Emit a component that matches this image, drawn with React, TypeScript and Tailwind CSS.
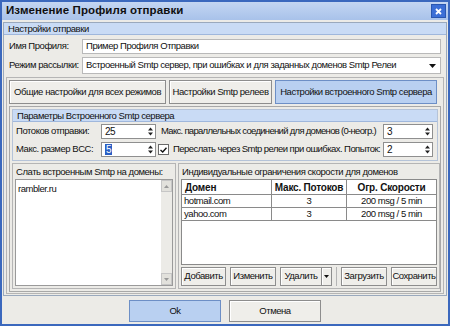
import React from 'react';

const Spin = ({ value, w, selected }: { value: string; w: string; selected?: boolean }) => (
  <div className={`${w} shrink-0 h-[15px] bg-white border border-[#8f8f8f] flex items-center pl-[3px] pr-[2px]`}>
    <span className="flex-1 text-[10px] leading-[12px]">
      {selected ? <span className="bg-[#2a5fc4] text-white px-[1px]">{value}</span> : value}
    </span>
    <svg width="5" height="9" viewBox="0 0 5 9">
      <path d="M2.5 0.5 L5 3.5 L0 3.5 Z" fill="#222" />
      <path d="M0 5.5 L5 5.5 L2.5 8.5 Z" fill="#222" />
    </svg>
  </div>
);

const Btn = ({ children, className = '' }: { children: React.ReactNode; className?: string }) => (
  <div
    className={`h-[19px] shrink-0 flex items-center justify-center border border-[#8d8d8d] bg-[#efeeea] shadow-[inset_1px_1px_0_#fff] ${className}`}
  >
    {children}
  </div>
);

const GroupHead = ({ children }: { children: React.ReactNode }) => (
  <div className="h-[12px] bg-[#c9dbf5] border-b border-[#9fb7dc] flex items-center pl-[4px] leading-none text-[#111]">
    {children}
  </div>
);

export default function App() {
  return (
    <div className="w-[450px] h-[326px] bg-[#3b68bd] p-[2px] font-['Liberation_Sans',Arial,sans-serif] text-[9.5px] text-[#111] overflow-hidden whitespace-nowrap tracking-[-0.45px]">
      <div className="w-full h-full flex flex-col bg-[#ecebe7]">
        {/* title bar */}
        <div className="h-[18px] shrink-0 bg-gradient-to-b from-[#c4d6f2] to-[#a8c2ea] flex items-center pl-[4px] pr-[2px]">
          <span className="flex-1 text-[11.5px] font-bold tracking-[0.1px] text-[#101010]">Изменение Профиля отправки</span>
          <div className="w-[15px] h-[14px] bg-[#3c6fd6] border border-[#2a57b0] flex items-center justify-center">
            <svg width="7" height="7" viewBox="0 0 7 7">
              <path d="M1 1 L6 6 M6 1 L1 6" stroke="#fff" strokeWidth="1.8" />
            </svg>
          </div>
        </div>

        {/* main group */}
        <div className="mx-[1px] mt-[2px] border border-[#9aa9bd] bg-[#ecebe7] flex flex-col">
          <GroupHead>Настройки отправки</GroupHead>
          <div className="flex items-center h-[18px] mt-[2px] px-[5px]">
            <span className="w-[73px] shrink-0">Имя Профиля:</span>
            <div className="flex-1 h-[15px] bg-white border border-[#b9b9b9] flex items-center pl-[3px]">
              Пример Профиля Отправки
            </div>
          </div>
          <div className="flex items-center h-[19px] mt-[1px] px-[5px]">
            <span className="w-[73px] shrink-0">Режим рассылки:</span>
            <div className="flex-1 h-[17px] bg-white border border-[#b9b9b9] flex items-center pl-[3px] pr-[4px]">
              <span className="flex-1">Встроенный Smtp сервер, при ошибках и для заданных доменов Smtp Релеи</span>
              <svg width="7" height="4" viewBox="0 0 7 4">
                <path d="M0 0 L7 0 L3.5 4 Z" fill="#111" />
              </svg>
            </div>
          </div>

          {/* tabs area */}
          <div className="mx-[2px] mt-[2px] mb-[1px] border border-[#b5b5b5] flex flex-col px-[2px] pb-[1px]">
            <div className="flex gap-[3px] mt-[2px] h-[24px]">
              <Btn className="w-[157px] h-[24px]">Общие настройки для всех режимов</Btn>
              <Btn className="w-[103px] h-[24px]">Настройки Smtp релеев</Btn>
              <div className="w-[162px] h-[24px] flex items-center justify-center border border-[#6d8fc6] bg-[#b9d0f1]">
                Настройки встроенного Smtp сервера
              </div>
            </div>

            <div className="mt-[2px] border border-[#a8a8a8] flex flex-col p-[2px]">
              <div className="border border-[#b5c3d8] flex flex-col">
                <GroupHead>Параметры Встроенного Smtp сервера</GroupHead>
                <div className="flex items-center h-[15px] mt-[2px] pl-[3px] pr-[4px]">
                  <span className="w-[85px] shrink-0">Потоков отправки:</span>
                  <Spin value="25" w="w-[55px]" />
                  <span className="ml-[5px] flex-1 min-w-0 overflow-hidden tracking-[-0.7px]">Макс. параллельных соединений для доменов (0-неогр.)</span>
                  <Spin value="3" w="w-[50px]" />
                </div>
                <div className="flex items-center h-[15px] mt-[3px] mb-[3px] pl-[3px] pr-[4px]">
                  <span className="w-[85px] shrink-0">Макс. размер BCC:</span>
                  <Spin value="5" w="w-[55px]" selected />
                  <div className="ml-[2px] shrink-0 w-[11px] h-[11px] bg-white border border-[#6a6a6a] flex items-center justify-center">
                    <svg width="7" height="6" viewBox="0 0 7 6">
                      <path d="M0.5 3 L2.7 5 L6.5 0.7" stroke="#111" strokeWidth="1.4" fill="none" />
                    </svg>
                  </div>
                  <span className="ml-[4px] flex-1 min-w-0 overflow-hidden tracking-[-0.55px]">Переслать через Smtp релеи при ошибках. Попыток:</span>
                  <Spin value="2" w="w-[50px]" />
                </div>
              </div>

              <div className="flex gap-[2px] mt-[2px] h-[126px]">
                {/* left list */}
                <div className="w-[164px] shrink-0 border border-[#b5b5b5] flex flex-col px-[2px] pb-[2px]">
                  <span className="mt-[2px] ml-[1px] leading-[12px]">Слать встроенным Smtp на домены:</span>
                  <div className="flex-1 mt-[1px] border border-[#9a9a9a] bg-white flex">
                    <div className="flex-1 pl-[2px] pt-[2px]">rambler.ru</div>
                    <div className="w-[11px] bg-[#ecebe7] flex flex-col justify-between">
                      <div className="h-[12px] border border-[#c6c6c6] bg-[#e2e1dc] flex items-center justify-center">
                        <svg width="5" height="3" viewBox="0 0 5 3"><path d="M0 3 L5 3 L2.5 0 Z" fill="#999" /></svg>
                      </div>
                      <div className="h-[12px] border border-[#c6c6c6] bg-[#e2e1dc] flex items-center justify-center">
                        <svg width="5" height="3" viewBox="0 0 5 3"><path d="M0 0 L5 0 L2.5 3 Z" fill="#999" /></svg>
                      </div>
                    </div>
                  </div>
                </div>

                {/* right table */}
                <div className="flex-1 border border-[#b5b5b5] flex flex-col px-[2px] pb-[2px]">
                  <span className="mt-[2px] ml-[1px] leading-[12px]">Индивидуальные ограничения скорости для доменов</span>
                  <div className="flex-1 mt-[1px] border border-[#8a8a8a] bg-white flex flex-col">
                    <div className="flex h-[15px] border-b border-[#8a8a8a] text-[10px] font-bold tracking-[-0.2px]">
                      <div className="w-[90px] border-r border-[#8a8a8a] pl-[3px] flex items-center">Домен</div>
                      <div className="w-[75px] border-r border-[#8a8a8a] flex items-center justify-center">Макс. Потоков</div>
                      <div className="flex-1 flex items-center justify-center">Огр. Скорости</div>
                    </div>
                    {[
                      ['hotmail.com', '3', '200 msg / 5 min'],
                      ['yahoo.com', '3', '200 msg / 5 min'],
                    ].map((r) => (
                      <div key={r[0]} className="flex h-[13px] border-b border-[#8a8a8a]">
                        <div className="w-[90px] border-r border-[#8a8a8a] pl-[2px] flex items-center">{r[0]}</div>
                        <div className="w-[75px] border-r border-[#8a8a8a] flex items-center justify-center">{r[1]}</div>
                        <div className="flex-1 flex items-center justify-center">{r[2]}</div>
                      </div>
                    ))}
                  </div>
                  <div className="flex items-center mt-[2px] gap-[4px]">
                    <Btn className="w-[45px]">Добавить</Btn>
                    <Btn className="w-[46px]">Изменить</Btn>
                    <div className="flex">
                      <Btn className="w-[42px]">Удалить</Btn>
                      <Btn className="w-[10px] border-l-0">
                        <svg width="5" height="3" viewBox="0 0 5 3"><path d="M0 0 L5 0 L2.5 3 Z" fill="#111" /></svg>
                      </Btn>
                    </div>
                    <div className="w-[1px] h-[19px] bg-[#b5b5b5]" />
                    <Btn className="w-[46px]">Загрузить</Btn>
                    <Btn className="w-[46px]">Сохранить</Btn>
                  </div>
                </div>
              </div>
            </div>
          </div>
        </div>

        {/* bottom buttons */}
        <div className="flex-1 flex items-center justify-center gap-[8px] pt-[2px]">
          <div className="w-[92px] h-[22px] flex items-center justify-center border border-[#6d8fc6] bg-[#b9d0f1]">Ok</div>
          <Btn className="w-[92px] h-[22px]">Отмена</Btn>
        </div>
      </div>
    </div>
  );
}
